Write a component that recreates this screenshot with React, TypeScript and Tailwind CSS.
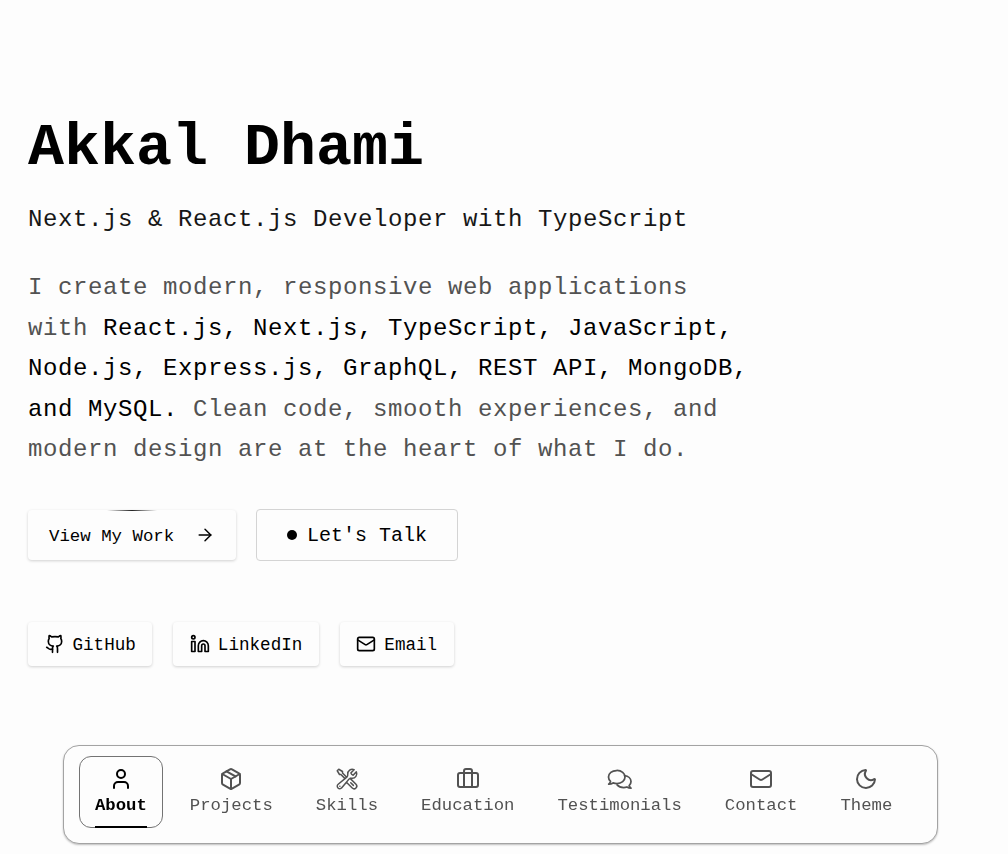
import { ArrowRight, Briefcase, Github, Linkedin, Mail, Moon, Package, User } from "lucide-react";
import { HiOutlineWrenchScrewdriver } from "react-icons/hi2";

const mono = "font-['Liberation_Mono',monospace]";

function ChatsIcon({ size = 24 }: { size?: number }) {
  return (
    <svg
      width={size + 2}
      height={size}
      viewBox="0 0 26 24"
      fill="none"
      stroke="currentColor"
      strokeWidth="1.75"
      strokeLinejoin="round"
      strokeLinecap="round"
    >
      <path d="M9.5 3.5C5 3.5 1.5 6.3 1.5 10c0 1.7.8 3.2 2 4.4-.2 1-.8 2-1.8 2.8 1.6 0 3.2-.5 4.4-1.3 1.2.4 2.5.6 3.9.6 4.5 0 8-2.9 8-6.5s-3.5-6.5-8-6.5Z" />
      <path d="M17.6 8.6c3.6.4 6.4 2.9 6.4 5.9 0 1.5-.7 2.9-1.8 4 .2 1 .9 2 1.8 2.7-1.6 0-3-.5-4.1-1.2-1 .3-2.1.5-3.2.5-2.8 0-5.2-1-6.6-2.6" />
    </svg>
  );
}

const nav = [
  { label: "About", icon: User, active: true },
  { label: "Projects", icon: Package },
  { label: "Skills", icon: HiOutlineWrenchScrewdriver },
  { label: "Education", icon: Briefcase },
  { label: "Testimonials", icon: ChatsIcon },
  { label: "Contact", icon: Mail },
  { label: "Theme", icon: Moon },
];

const socials = [
  { label: "GitHub", icon: Github },
  { label: "LinkedIn", icon: Linkedin },
  { label: "Email", icon: Mail },
];

export default function App() {
  return (
    <div className={`${mono} min-h-[854px] bg-[#fdfdfd] text-black overflow-hidden`}>
      <main className="px-7 pt-[112px]">
        <h1 className="text-6xl leading-[72px] font-bold">Akkal Dhami</h1>
        <h2 className="mt-[20px] text-2xl leading-8 tracking-wide text-[#171717]">
          Next.js &amp; React.js Developer with TypeScript
        </h2>
        <p className="mt-[32px] w-[740px] text-2xl leading-[40.5px] tracking-wide text-[#525252]">
          I create modern, responsive web applications
          <br />
          with <span className="text-black">React.js, Next.js, TypeScript, JavaScript,</span>
          <br />
          <span className="text-black">Node.js, Express.js, GraphQL, REST API, MongoDB,</span>
          <br />
          <span className="text-black">and MySQL.</span> Clean code, smooth experiences, and
          <br />
          modern design are at the heart of what I do.
        </p>

        <div className="mt-[38px] flex items-center gap-5">
          <button className="relative flex h-[50px] w-[208px] items-center gap-[21px] rounded bg-[#fdfdfd] pl-[21px] text-[17.4px] shadow-[0_1px_3px_rgba(0,0,0,0.18)]">
            <span className="absolute left-[79px] top-0 h-px w-[50px] bg-gradient-to-r from-transparent via-[#222222] to-transparent" />
            <span className="pt-[5px]">View My Work</span>
            <ArrowRight size={20} strokeWidth={1.75} />
          </button>
          <button className="flex h-[52px] w-[202px] items-center justify-center gap-[10px] rounded border border-[#d4d4d4] text-xl">
            <span className="size-[10px] rounded-full bg-black" />
            <span className="pt-[2px]">Let's Talk</span>
          </button>
        </div>

        <div className="mt-[61px] flex gap-[21px]">
          {socials.map(({ label, icon: Icon }) => (
            <a
              key={label}
              className="flex h-[44px] items-center gap-2 rounded bg-[#fdfdfd] px-[16.5px] text-[17.6px] shadow-[0_1px_3px_rgba(0,0,0,0.18)]"
            >
              <Icon size={20} />
              <span className="pt-[3px]">{label}</span>
            </a>
          ))}
        </div>
      </main>

      <nav className="fixed left-[63px] top-[745px] flex h-[99px] w-[875px] items-start gap-[11px] rounded-2xl border border-[#a3a3a3] bg-[#fdfdfd] pl-[15px] pt-[10px] shadow-[0_1px_2px_rgba(0,0,0,0.25)]">
        {nav.map(({ label, icon: Icon, active }) => (
          <button
            key={label}
            className={`relative flex h-[72px] flex-col items-center justify-center gap-[3px] rounded-xl text-[17.3px] leading-6 ${
              active ? "border border-[#737373] px-[15px] font-bold text-black" : "px-4 text-[#525252]"
            }`}
          >
            <Icon size={24} />
            {label}
            {active && <span className="absolute -bottom-px left-[15px] h-[2px] w-[52px] bg-black" />}
          </button>
        ))}
      </nav>
    </div>
  );
}
